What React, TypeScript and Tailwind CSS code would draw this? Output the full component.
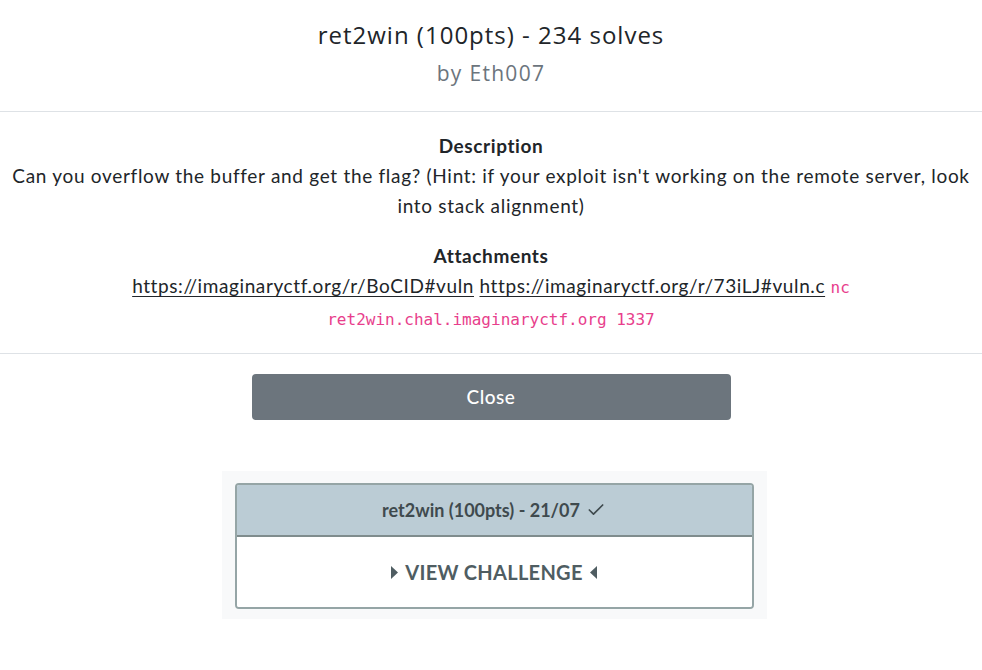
import { Check } from "lucide-react";

const Caret = ({ dir }: { dir: "left" | "right" }) => (
  <svg width="9" height="15" viewBox="0 0 9 15" className="fill-current">
    {dir === "right" ? <path d="M1 1 L8 7.5 L1 14 Z" /> : <path d="M8 1 L1 7.5 L8 14 Z" />}
  </svg>
);

const App = () => {
  const attachments = [
    "https://imaginaryctf.org/r/BoCID#vuln",
    "https://imaginaryctf.org/r/73iLJ#vuln.c",
  ];

  return (
    <div className="min-h-screen w-[982px] bg-white text-[#212529] font-['Lato',sans-serif]">
      {/* header */}
      <div className="pt-[18px] pb-[24px] flex flex-col items-center border-b border-[#dee2e6]">
        <h2 className="text-[24px] leading-[34px] tracking-[1px] font-['Open_Sans',sans-serif] font-normal text-[#212529]">
          ret2win (100pts) - 234 solves
        </h2>
        <h4 className="mt-[7px] text-[21px] leading-[28px] tracking-[1.3px] font-['Open_Sans',sans-serif] text-[#6c757d]">
          by Eth007
        </h4>
      </div>

      {/* body */}
      <div className="px-[10px] pt-[19px] pb-[18px] text-center text-[19px] leading-[30px] border-b border-[#dee2e6]">
        <div className="font-bold tracking-[0.6px]">Description</div>
        <p className="tracking-[0.7px]">
          Can you overflow the buffer and get the flag? (Hint: if your exploit isn't working on the remote server, look into stack alignment)
        </p>
        <div className="mt-[20px] font-bold tracking-[0.6px]">Attachments</div>
        <p className="px-[110px] tracking-[0.6px]">
          {attachments.map((link) => (
            <span key={link}>
              <a href="#" className="underline underline-offset-3">
                {link}
              </a>{" "}
            </span>
          ))}
          <code className="font-['DejaVu_Sans_Mono',monospace] text-[16px] tracking-normal text-[#e83e8c]">
            nc ret2win.chal.imaginaryctf.org 1337
          </code>
        </p>
      </div>

      {/* footer */}
      <div className="pt-[20px] flex justify-center">
        <button className="w-[479px] h-[46px] rounded-[4px] bg-[#6c757d] text-white text-[19px] tracking-[0.5px] font-['Lato',sans-serif] font-medium">
          Close
        </button>
      </div>

      {/* challenge card */}
      <div className="mt-[51px] pl-[6px] flex justify-center">
        <div className="w-[545px] bg-[#f8f9fa] px-[13px] pt-[12px] pb-[10px]">
          <div className="rounded-[4px] border-2 border-[#95a5a6] overflow-hidden">
            <div className="h-[52px] bg-[#bbccd5] border-b-2 border-[#7f8c8d] flex items-center justify-center gap-[6px] text-[18px] font-bold text-[#3f4a4e]">
              <span>ret2win (100pts) - 21/07</span>
              <Check className="w-[20px] h-[20px]" strokeWidth={2} />
            </div>
            <div className="h-[70px] bg-white flex items-center justify-center gap-[6px] text-[20px] font-bold uppercase tracking-[0.3px] text-[#4f5d62]">
              <Caret dir="right" />
              <span>View Challenge</span>
              <Caret dir="left" />
            </div>
          </div>
        </div>
      </div>
    </div>
  );
};

export default App;
